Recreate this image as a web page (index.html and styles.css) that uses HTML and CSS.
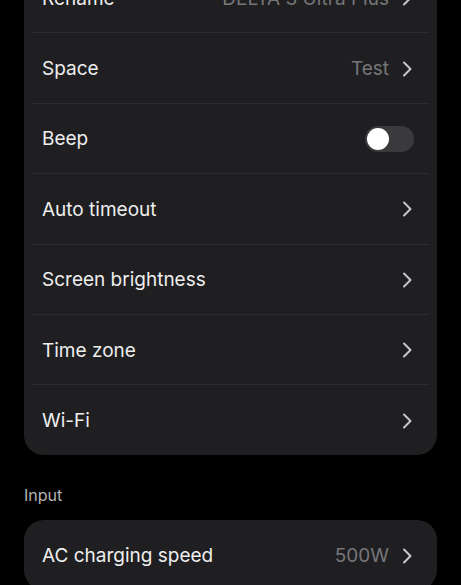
FILE: index.html
```html
<html>
<head>
<title>Device settings</title>
<link rel="stylesheet" href="styles.css">
</head>
<body>
<div class="page">

  <div class="card">
    <div class="row">
      <span class="label">Rename</span>
      <span class="value">DELTA 3 Ultra Plus</span>
      <svg class="chev" viewBox="0 0 10 16"><path d="M2 1.5 L8.5 8 L2 14.5"/></svg>
    </div>
    <div class="row">
      <span class="label">Space</span>
      <span class="value">Test</span>
      <svg class="chev" viewBox="0 0 10 16"><path d="M2 1.5 L8.5 8 L2 14.5"/></svg>
    </div>
    <div class="row">
      <span class="label">Beep</span>
      <span class="toggle"><span class="knob"></span></span>
    </div>
    <div class="row">
      <span class="label">Auto timeout</span>
      <svg class="chev" viewBox="0 0 10 16"><path d="M2 1.5 L8.5 8 L2 14.5"/></svg>
    </div>
    <div class="row">
      <span class="label">Screen brightness</span>
      <svg class="chev" viewBox="0 0 10 16"><path d="M2 1.5 L8.5 8 L2 14.5"/></svg>
    </div>
    <div class="row">
      <span class="label">Time zone</span>
      <svg class="chev" viewBox="0 0 10 16"><path d="M2 1.5 L8.5 8 L2 14.5"/></svg>
    </div>
    <div class="row">
      <span class="label">Wi-Fi</span>
      <svg class="chev" viewBox="0 0 10 16"><path d="M2 1.5 L8.5 8 L2 14.5"/></svg>
    </div>
  </div>

  <h2 class="section">Input</h2>

  <div class="card">
    <div class="row">
      <span class="label">AC charging speed</span>
      <span class="value">500W</span>
      <svg class="chev" viewBox="0 0 10 16"><path d="M2 1.5 L8.5 8 L2 14.5"/></svg>
    </div>
  </div>

</div>
</body>
</html>
```

FILE: styles.css
```css
body {
  margin: 0;
  background: #000;
  color: #eeeeee;
  font-family: Inter, "Noto Sans", sans-serif;
  overflow: hidden;
}

/* the list is scrolled, the first row sits half above the window */
.page { margin-top: -38px; padding: 0 24px; }

.card {
  background: #1f1f21;
  border-radius: 20px;
  overflow: hidden;
}

.row {
  display: flex;
  align-items: center;
  height: 70.4px;
  padding: 2px 25px 0 18px;
  position: relative;
  box-sizing: border-box;
}
.row + .row::before {
  content: "";
  position: absolute;
  top: 0; left: 8px; right: 8px;
  border-top: 1px solid #2c2c2e;
}

.label { flex: 1; font-size: 19px; }
.value { font-size: 19px; color: #767679; margin-right: 13px; }

.chev { width: 10px; height: 16px; }
.chev path { fill: none; stroke: #c8c8ca; stroke-width: 2; stroke-linecap: round; stroke-linejoin: round; }

.toggle {
  display: flex;
  align-items: center;
  width: 49px; height: 26px;
  border-radius: 13px;
  background: #3a3a3c;
  margin-right: -2px;
  padding: 0 2px;
  box-sizing: border-box;
}
.knob { width: 22px; height: 22px; border-radius: 50%; background: #fff; }

.section {
  font-size: 16px;
  font-weight: normal;
  color: #b4b4b6;
  margin: 0;
  padding: 30px 0 15px;
}
```
